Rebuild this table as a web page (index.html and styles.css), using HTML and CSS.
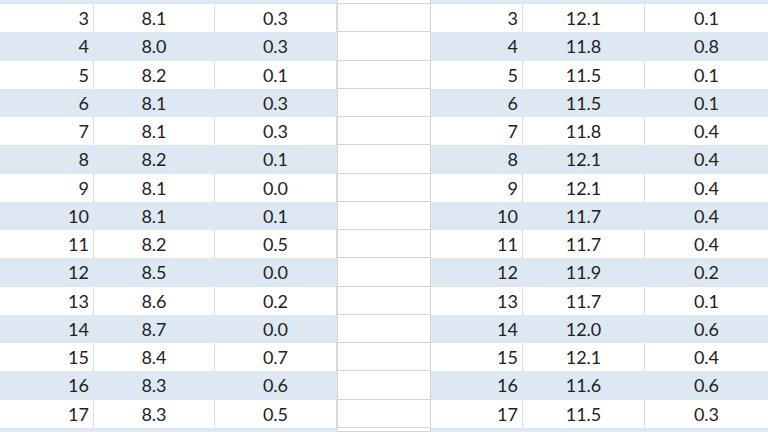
FILE: index.html
```html
<!DOCTYPE html>
<html>
<head>
<meta charset="utf-8">
<link rel="stylesheet" href="styles.css">
</head>
<body>
<div class="sheet">
  <div class="row band edge"><div class="c a"></div><div class="c b"></div><div class="c b"></div><div class="c gap"></div><div class="c a"></div><div class="c b"></div><div class="c b last"></div></div>
  <div class="row"><div class="c a">3</div><div class="c b">8.1</div><div class="c b">0.3</div><div class="c gap"></div><div class="c a">3</div><div class="c b">12.1</div><div class="c b last">0.1</div></div>
  <div class="row band"><div class="c a">4</div><div class="c b">8.0</div><div class="c b">0.3</div><div class="c gap"></div><div class="c a">4</div><div class="c b">11.8</div><div class="c b last">0.8</div></div>
  <div class="row"><div class="c a">5</div><div class="c b">8.2</div><div class="c b">0.1</div><div class="c gap"></div><div class="c a">5</div><div class="c b">11.5</div><div class="c b last">0.1</div></div>
  <div class="row band"><div class="c a">6</div><div class="c b">8.1</div><div class="c b">0.3</div><div class="c gap"></div><div class="c a">6</div><div class="c b">11.5</div><div class="c b last">0.1</div></div>
  <div class="row"><div class="c a">7</div><div class="c b">8.1</div><div class="c b">0.3</div><div class="c gap"></div><div class="c a">7</div><div class="c b">11.8</div><div class="c b last">0.4</div></div>
  <div class="row band"><div class="c a">8</div><div class="c b">8.2</div><div class="c b">0.1</div><div class="c gap"></div><div class="c a">8</div><div class="c b">12.1</div><div class="c b last">0.4</div></div>
  <div class="row"><div class="c a">9</div><div class="c b">8.1</div><div class="c b">0.0</div><div class="c gap"></div><div class="c a">9</div><div class="c b">12.1</div><div class="c b last">0.4</div></div>
  <div class="row band"><div class="c a">10</div><div class="c b">8.1</div><div class="c b">0.1</div><div class="c gap"></div><div class="c a">10</div><div class="c b">11.7</div><div class="c b last">0.4</div></div>
  <div class="row"><div class="c a">11</div><div class="c b">8.2</div><div class="c b">0.5</div><div class="c gap"></div><div class="c a">11</div><div class="c b">11.7</div><div class="c b last">0.4</div></div>
  <div class="row band"><div class="c a">12</div><div class="c b">8.5</div><div class="c b">0.0</div><div class="c gap"></div><div class="c a">12</div><div class="c b">11.9</div><div class="c b last">0.2</div></div>
  <div class="row"><div class="c a">13</div><div class="c b">8.6</div><div class="c b">0.2</div><div class="c gap"></div><div class="c a">13</div><div class="c b">11.7</div><div class="c b last">0.1</div></div>
  <div class="row band"><div class="c a">14</div><div class="c b">8.7</div><div class="c b">0.0</div><div class="c gap"></div><div class="c a">14</div><div class="c b">12.0</div><div class="c b last">0.6</div></div>
  <div class="row"><div class="c a">15</div><div class="c b">8.4</div><div class="c b">0.7</div><div class="c gap"></div><div class="c a">15</div><div class="c b">12.1</div><div class="c b last">0.4</div></div>
  <div class="row band"><div class="c a">16</div><div class="c b">8.3</div><div class="c b">0.6</div><div class="c gap"></div><div class="c a">16</div><div class="c b">11.6</div><div class="c b last">0.6</div></div>
  <div class="row"><div class="c a">17</div><div class="c b">8.3</div><div class="c b">0.5</div><div class="c gap"></div><div class="c a">17</div><div class="c b">11.5</div><div class="c b last">0.3</div></div>
  <div class="row band edge"><div class="c a"></div><div class="c b"></div><div class="c b"></div><div class="c gap"></div><div class="c a"></div><div class="c b"></div><div class="c b last"></div></div>
</div>
</body>
</html>
```
FILE: styles.css
```css
html, body {
  margin: 0;
  padding: 0;
  background: #ffffff;
}
body {
  width: 768px;
  height: 432px;
  overflow: hidden;
}
.sheet {
  font-family: Lato, "Open Sans", sans-serif;
  font-size: 18px;
  color: #222222;
}
.row {
  display: grid;
  grid-template-columns: 94px 121px 122px 94px 92px 122px 123px;
  height: 28.26px;
}
.row.edge {
  height: 4px;
}
.c {
  box-sizing: border-box;
  display: flex;
  align-items: center;
  border-right: 1px solid #dcdcdc;
  background: #ffffff;
}
.band .c {
  background: #dde8f3;
  border-right-color: #dde8f3;
}
.c.a {
  justify-content: flex-end;
  padding-right: 4px;
}
.c.b {
  justify-content: center;
}
.c.gap,
.band .c.gap {
  background: #ffffff;
  border-left: 1px solid #d4d4d4;
  border-right: 1px solid #d4d4d4;
  border-bottom: 1px solid #d4d4d4;
}
.c.last {
  border-right: none;
}
```
